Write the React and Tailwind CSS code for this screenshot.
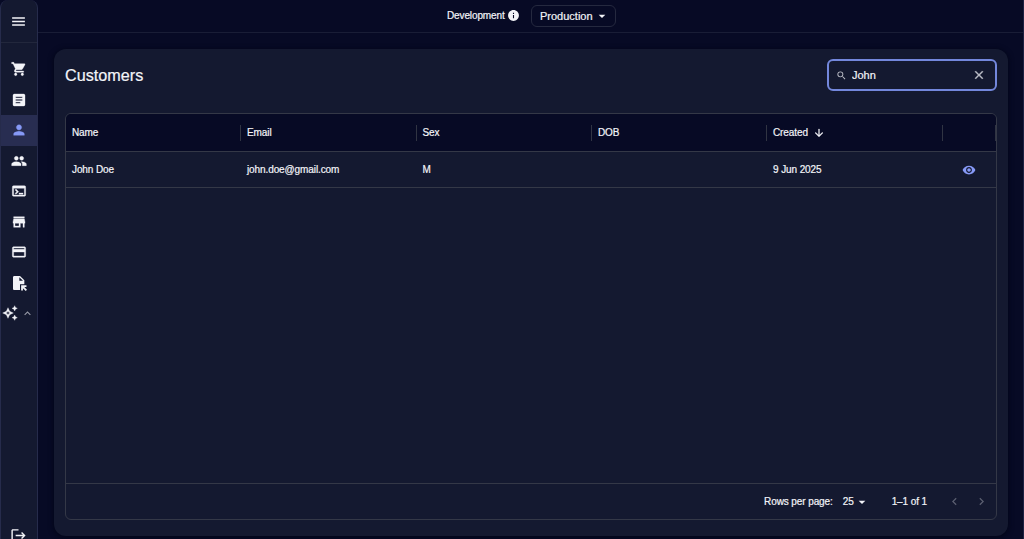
import { useState } from 'react';
import {
  MdMenu,
  MdShoppingCart,
  MdArticle,
  MdPerson,
  MdPeople,
  MdOutlineTerminal,
  MdStore,
  MdCreditCard,
  MdOutlineAutoAwesome,
  MdExpandLess,
  MdLogout,
  MdInfo,
  MdArrowDropDown,
  MdSearch,
  MdClose,
  MdArrowDownward,
  MdVisibility,
  MdChevronLeft,
  MdChevronRight,
} from 'react-icons/md';

function FileArrowIcon({ className }) {
  return (
    <svg viewBox="0 0 24 24" fill="currentColor" className={className}>
      <path d="M5 1.500c-1.100 0-2 .9-2 2v17c0 1.100.9 2 2 2h8.500V14H20V8l-6.500-6.500H5zM12.500 8.500V3.500l5.500 5z" />
      <path d="M15.200 15.500h8v2.600h-3.200l4 4-1.900 1.900-4.200-4.200v3.400h-2.700z" />
    </svg>
  );
}

const navItems = [
  { id: 'orders', icon: MdShoppingCart },
  { id: 'reports', icon: MdArticle },
  { id: 'customers', icon: MdPerson },
  { id: 'team', icon: MdPeople },
  { id: 'console', icon: MdOutlineTerminal },
  { id: 'stores', icon: MdStore },
  { id: 'payments', icon: MdCreditCard },
  { id: 'files', icon: FileArrowIcon },
];

const columns = ['Name', 'Email', 'Sex', 'DOB', 'Created'];

const customers = [
  { name: 'John Doe', email: 'john.doe@gmail.com', sex: 'M', dob: '', created: '9 Jun 2025' },
];

const gridCols = 'grid grid-cols-[175px_175.500px_175.500px_175px_175.500px_1fr]';

function Sidebar({ active, onSelect }) {
  return (
    <aside className="flex h-full w-[38px] shrink-0 flex-col rounded-t-lg border-x border-[#262b4b] bg-[#141930]">
      <div className="flex h-[43px] shrink-0 items-center justify-center border-b border-[#22273c] pr-px">
        <button type="button"><MdMenu className="size-[17px]" /></button>
      </div>
      <nav className="mt-[11px] flex flex-col">
        {navItems.map(({ id, icon: Icon }) => (
          <button
            key={id}
            type="button"
            onClick={() => onSelect(id)}
            className={`flex h-[30.500px] items-center justify-center pr-px ${active === id ? 'bg-[#282d51] text-[#8699f6]' : ''}`}
          >
            <Icon className="size-[16px] [&>path:last-child]:[stroke-width:0.5px]" />
          </button>
        ))}
        <button type="button" className="flex h-[30.500px] items-center gap-[3px] pl-px">
          <MdOutlineAutoAwesome className="size-[16px] shrink-0 [&>path:last-child]:[stroke-width:0.5px]" />
          <MdExpandLess className="size-[13px] shrink-0 text-[#9a9da9]" />
        </button>
      </nav>
      <button type="button" className="mt-auto -mb-[5px] flex justify-center pr-px">
        <MdLogout className="size-[17px]" />
      </button>
    </aside>
  );
}

function Topbar() {
  return (
    <header className="flex h-[32.500px] shrink-0 items-center border-b border-[#191d36] pl-[409px]">
      <span className="w-[57px] text-[10px] tracking-[-0.12px] whitespace-nowrap">Development</span>
      <MdInfo className="ml-[3px] size-[13px]" />
      <button
        type="button"
        className="ml-[11px] flex h-[22px] w-[85px] items-center rounded-md border border-[#25293f] pl-[8px] text-[11px]"
      >
        <span className="w-[53px] text-left">Production</span>
        <MdArrowDropDown className="ml-px size-[16px]" />
      </button>
    </header>
  );
}

export default function App() {
  const [active, setActive] = useState('customers');
  const [search, setSearch] = useState('John');

  const rows = customers.filter((c) => c.name.toLowerCase().includes(search.toLowerCase()));

  return (
    <div className="flex h-screen overflow-hidden bg-[#070a25] font-['Liberation_Sans',Arial,sans-serif] text-[#f3f4f8] [-webkit-text-stroke:0.2px]">
      <Sidebar active={active} onSelect={setActive} />
      <div className="flex min-w-0 flex-1 flex-col border-r border-[#1d2242]">
        <Topbar />
        <main className="flex min-h-0 flex-1 flex-col pt-[16.500px] pr-[15px] pb-[3px] pl-4">
          <section className="flex flex-1 flex-col rounded-xl bg-[#141930] px-[11px] pt-[10px] pb-4 shadow-[0_1px_5px_1px_#03061a]">
            <div className="flex h-8 items-center justify-between">
              <h1 className="text-[16.200px]">Customers</h1>
              <div className="flex h-full w-[170px] items-center rounded-md border-2 border-[#7387dc] pr-[9px] pl-[7px]">
                <MdSearch className="size-[11px] shrink-0 text-[#c0c2cb]" />
                <input
                  type="text"
                  value={search}
                  onChange={(e) => setSearch(e.target.value)}
                  className="ml-[5px] min-w-0 flex-1 bg-transparent text-[11px] outline-none"
                />
                <button type="button" onClick={() => setSearch('')}>
                  <MdClose className="size-[14px] text-[#c0c2cb] [&>path:last-child]:[stroke-width:0.6px]" />
                </button>
              </div>
            </div>

            <div className="mt-[22px] flex flex-1 flex-col overflow-hidden rounded-md border border-[#343847] text-[10px] tracking-[-0.1px]">
              <div className={`${gridCols} h-[38px] shrink-0 items-center border-b border-[#343847] bg-[#070a25]`}>
                {columns.map((col) => (
                  <div key={col} className="flex h-4 items-center border-r border-[#303443] pl-[6px]">
                    {col}
                    {col === 'Created' && (
                      <MdArrowDownward className="ml-[5px] size-[12px] [&>path:last-child]:[stroke-width:0.5px]" />
                    )}
                  </div>
                ))}
                <div className="h-4 border-r border-[#303443]" />
              </div>

              {rows.map((row) => (
                <div key={row.email} className={`${gridCols} h-9 shrink-0 items-center border-b border-[#343847]`}>
                  <div className="pl-[6px]">{row.name}</div>
                  <div className="pl-[6px]">{row.email}</div>
                  <div className="pl-[6px]">{row.sex}</div>
                  <div className="pl-[6px]">{row.dob}</div>
                  <div className="pl-[6px]">{row.created}</div>
                  <button type="button" className="flex justify-center">
                    <MdVisibility className="size-[14px] text-[#8699f6]" />
                  </button>
                </div>
              ))}

              <div className="mt-auto flex h-9 shrink-0 items-center justify-end border-t border-[#343847] pr-[7px]">
                <span>Rows per page:</span>
                <span className="ml-[10px]">25</span>
                <MdArrowDropDown className="size-[16px]" />
                <span className="ml-[22px]">1–1 of 1</span>
                <MdChevronLeft className="ml-[20px] size-[15px] text-[#5b5f70]" />
                <MdChevronRight className="ml-[12px] size-[15px] text-[#5b5f70]" />
              </div>
            </div>
          </section>
        </main>
      </div>
    </div>
  );
}
